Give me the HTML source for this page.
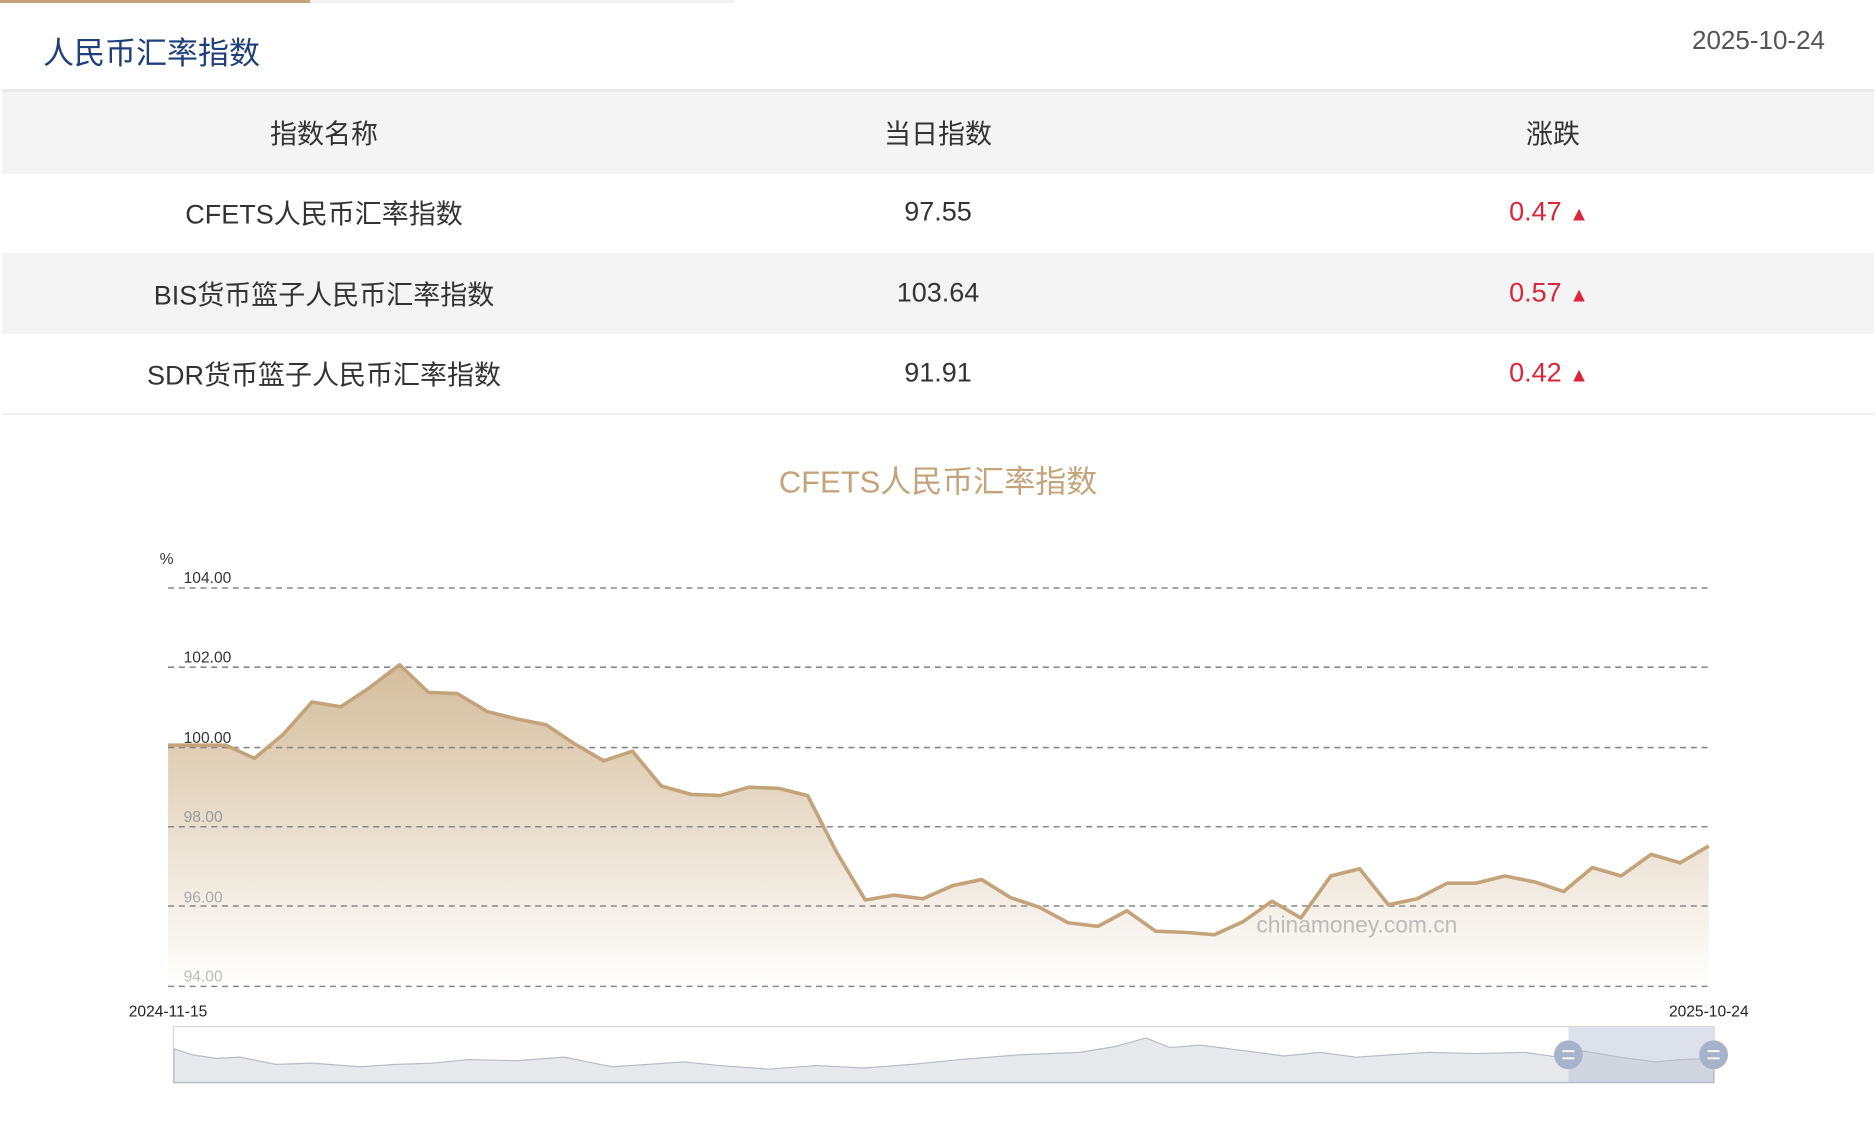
<!DOCTYPE html>
<html><head><meta charset="utf-8"><style>
body{margin:0;width:1876px;height:1124px;overflow:hidden;background:#fff;font-family:"Liberation Sans","Noto Sans CJK SC",sans-serif;position:relative}
.a{position:absolute}
.c{position:absolute;transform:translate(-50%,-50%);white-space:nowrap;color:#333;font-size:27px}
.r{color:#d9263a}
</style></head><body>
<div class="a" style="left:0;top:0;width:734px;height:3px;background:#f0f0f0"></div>
<div class="a" style="left:0;top:0;width:310px;height:3px;background:#c4a37a"></div>
<div class="a" style="left:43px;top:28px;font-size:31px;color:#1e3f7a">人民币汇率指数</div>
<div class="a" style="left:1692px;top:25px;font-size:26px;color:#555">2025-10-24</div>
<div class="a" style="left:2px;top:89px;width:1872px;height:3px;background:#ebebeb"></div>
<div class="a" style="left:2px;top:92px;width:1872px;height:82px;background:#f4f4f4"></div>
<div class="a" style="left:2px;top:253px;width:1872px;height:81px;background:#f4f4f4"></div>
<div class="a" style="left:2px;top:413px;width:1872px;height:2px;background:#f2f2f2"></div>
<div class="c" style="left:324px;top:132px">指数名称</div>
<div class="c" style="left:938px;top:132px">当日指数</div>
<div class="c" style="left:1553px;top:132px">涨跌</div>
<div class="c" style="left:324px;top:212px">CFETS人民币汇率指数</div>
<div class="c" style="left:938px;top:212px">97.55</div>
<div class="c r" style="left:1549px;top:212px">0.47 <span style="font-size:20px">▲</span></div>
<div class="c" style="left:324px;top:293px">BIS货币篮子人民币汇率指数</div>
<div class="c" style="left:938px;top:293px">103.64</div>
<div class="c r" style="left:1549px;top:293px">0.57 <span style="font-size:20px">▲</span></div>
<div class="c" style="left:324px;top:373px">SDR货币篮子人民币汇率指数</div>
<div class="c" style="left:938px;top:373px">91.91</div>
<div class="c r" style="left:1549px;top:373px">0.42 <span style="font-size:20px">▲</span></div>
<div class="c" style="left:938px;top:479px;color:#c4a37a;font-size:31px">CFETS人民币汇率指数</div>
<svg class="a" style="left:0;top:0" width="1876" height="1124" viewBox="0 0 1563.3 936.7" font-family="Liberation Sans,sans-serif">
<defs><linearGradient id="g" x1="0" y1="0" x2="0" y2="1"><stop offset="0" stop-color="#d4bd9b"/><stop offset="1" stop-color="#fff"/></linearGradient></defs>
<path fill="url(#g)" d="M140,621 L188,621 212,632 236,612 260,585 284,589 308,573 333,554 357,577 381,578 406,593 430,599 455,604 479,620 503,634 527,626 551,655 576,662 600,663 624,656 649,657 673,663 697,710 721,750 745,746 769,749 794,738 818,733 842,748 866,756 890,769 915,772 939,759 963,776 988,777 1012,779 1036,768 1060,751 1084,765 1109,730 1133,724 1157,754 1181,749 1206,736 1230,736 1254,730 1279,735 1303,743 1327,723 1351,730 1376,712 1400,719 1424,705 L1424,823 L140,823Z"/>
<g stroke="#888" stroke-dasharray="5,4" stroke-width="1.3">
<line x1="140" x2="1424" y1="490" y2="490"/><line x1="140" x2="1424" y1="556" y2="556"/><line x1="140" x2="1424" y1="623" y2="623"/><line x1="140" x2="1424" y1="689" y2="689"/><line x1="140" x2="1424" y1="755" y2="755"/><line x1="140" x2="1424" y1="822" y2="822"/></g>
<path fill="none" stroke="#c4a37a" stroke-width="3" stroke-linejoin="round" d="M140,621 L188,621 212,632 236,612 260,585 284,589 308,573 333,554 357,577 381,578 406,593 430,599 455,604 479,620 503,634 527,626 551,655 576,662 600,663 624,656 649,657 673,663 697,710 721,750 745,746 769,749 794,738 818,733 842,748 866,756 890,769 915,772 939,759 963,776 988,777 1012,779 1036,768 1060,751 1084,765 1109,730 1133,724 1157,754 1181,749 1206,736 1230,736 1254,730 1279,735 1303,743 1327,723 1351,730 1376,712 1400,719 1424,705"/>
<g font-size="13" fill="#333"><text x="133" y="470">%</text><text x="153" y="486">104.00</text><text x="153" y="552">102.00</text><text x="153" y="619">100.00</text><text x="153" y="685" fill="#999">98.00</text><text x="153" y="752" fill="#aaa">96.00</text><text x="153" y="818" fill="#bbb">94.00</text>
<text x="140" y="847" text-anchor="middle" fill="#222">2024-11-15</text><text x="1424" y="847" text-anchor="middle" fill="#222">2025-10-24</text></g>
<text x="1047" y="777" font-size="19" fill="#bbb">chinamoney.com.cn</text>
<rect x="144.5" y="855.5" width="1284" height="47" fill="#fff" stroke="#d8d8d8"/>
<path fill="#e8e9ec" stroke="#b8bcc4" stroke-width="1" d="M145,874 L160,879 180,882 200,881 230,887 260,886 300,889 330,887 360,886 390,883 430,884 470,881 490,885 510,889 540,887 570,885 600,888 640,891 680,888 720,890 760,887 800,883 850,879 900,877 930,872 955,865 975,873 1000,871 1040,876 1070,880 1100,877 1130,881 1160,879 1190,877 1230,878 1270,877 1300,881 1320,876 1350,881 1380,885 1400,883 1428,882 L1428,902 L145,902Z"/>
<rect x="1307" y="856" width="121" height="46" fill="#b4bdd2" opacity="0.45"/>
<g fill="#a7b3cb"><ellipse cx="1307" cy="879" rx="12" ry="12"/><ellipse cx="1428" cy="879" rx="12" ry="12"/></g>
<g stroke="#fff" stroke-width="1.5"><line x1="1302" x2="1312" y1="876" y2="876"/><line x1="1302" x2="1312" y1="882" y2="882"/><line x1="1423" x2="1433" y1="876" y2="876"/><line x1="1423" x2="1433" y1="882" y2="882"/></g>
</svg>
</body></html>
